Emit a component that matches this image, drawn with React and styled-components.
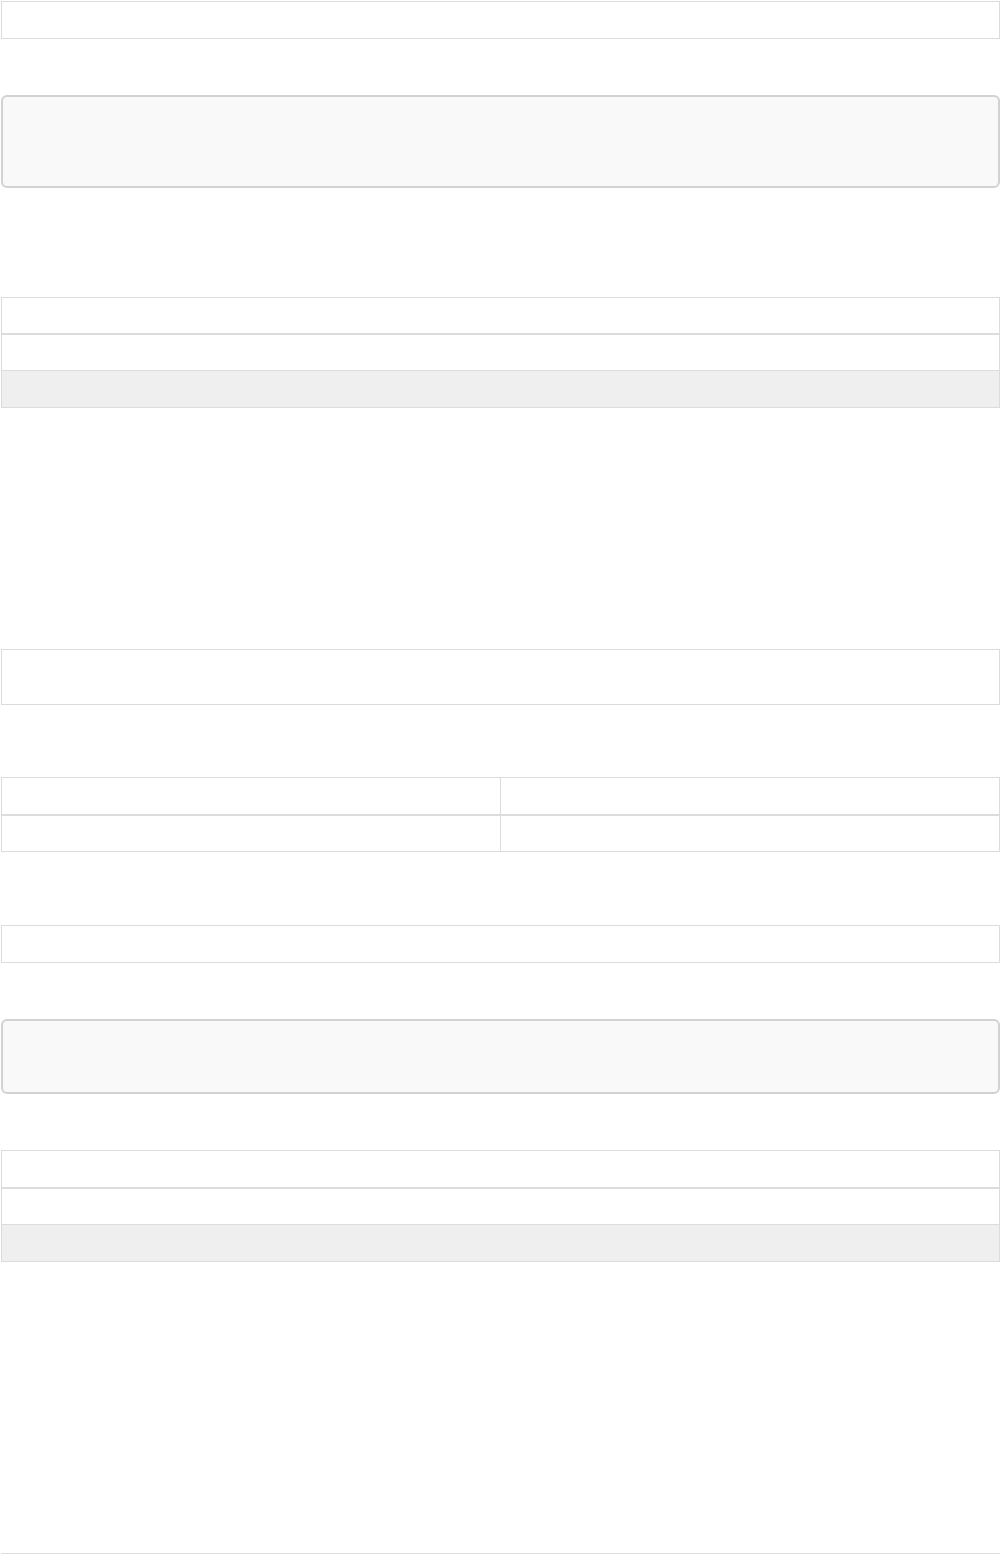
import React from 'react'
import styled, { createGlobalStyle } from 'styled-components'

const GlobalStyle = createGlobalStyle`
    html, body {
        margin: 0;
        padding: 0;
        background: #fff;
        font-family: "Liberation Sans", Arial, sans-serif;
    }
    *, *::before, *::after {
        box-sizing: border-box;
    }
`

const App = () => {
    return (
        <Page>
            <GlobalStyle />
            <Field height={38} />
            <Panel height={93} gap={56} />

            <Table gap={109}>
                <Row height={37} heavy />
                <Row height={36} />
                <Row height={37} shaded last />
            </Table>

            <Field height={56} gap={241} />

            <Table gap={72}>
                <Row height={38} heavy split>
                    <Cell />
                    <Cell />
                </Row>
                <Row height={36} split last>
                    <Cell />
                    <Cell />
                </Row>
            </Table>

            <Field height={38} gap={73} />
            <Panel height={75} gap={56} />

            <Table gap={56}>
                <Row height={38} heavy />
                <Row height={36} />
                <Row height={37} shaded last />
            </Table>

            <Rule />
        </Page>
    )
}

export default App

const Page = styled.div`
    display: flex;
    flex-direction: column;
    width: 1000px;
    padding: 1px 0 0 1px; // boxes sit one pixel in from the left and top edge
`
const Field = styled.div`
    height: ${(p) => p.height}px;
    margin-top: ${(p) => p.gap || 0}px;
    border: 1px solid #dcdcdc;
    background: #fff;
`
const Panel = styled.div`
    height: ${(p) => p.height}px;
    margin-top: ${(p) => p.gap || 0}px;
    border: 2px solid #d2d2d2;
    border-radius: 6px;
    background: #f9f9f9;
`
const Table = styled.div`
    display: flex;
    flex-direction: column;
    margin-top: ${(p) => p.gap || 0}px;
    border: 1px solid #dcdcdc;
    border-bottom: none;
`
const Row = styled.div`
    display: ${(p) => (p.split ? 'grid' : 'block')};
    grid-template-columns: 498px 1fr;
    height: ${(p) => p.height}px;
    background: ${(p) => (p.shaded ? '#efefef' : '#fff')};
    border-bottom: ${(p) => (p.heavy ? '2px' : '1px')} solid #dcdcdc;
`
const Cell = styled.div`
    height: 100%;
    & + & {
        border-left: 1px solid #dcdcdc; // column divider
    }
`
const Rule = styled.div`
    height: 1px;
    margin-top: 291px;
    background: #dcdcdc;
`
